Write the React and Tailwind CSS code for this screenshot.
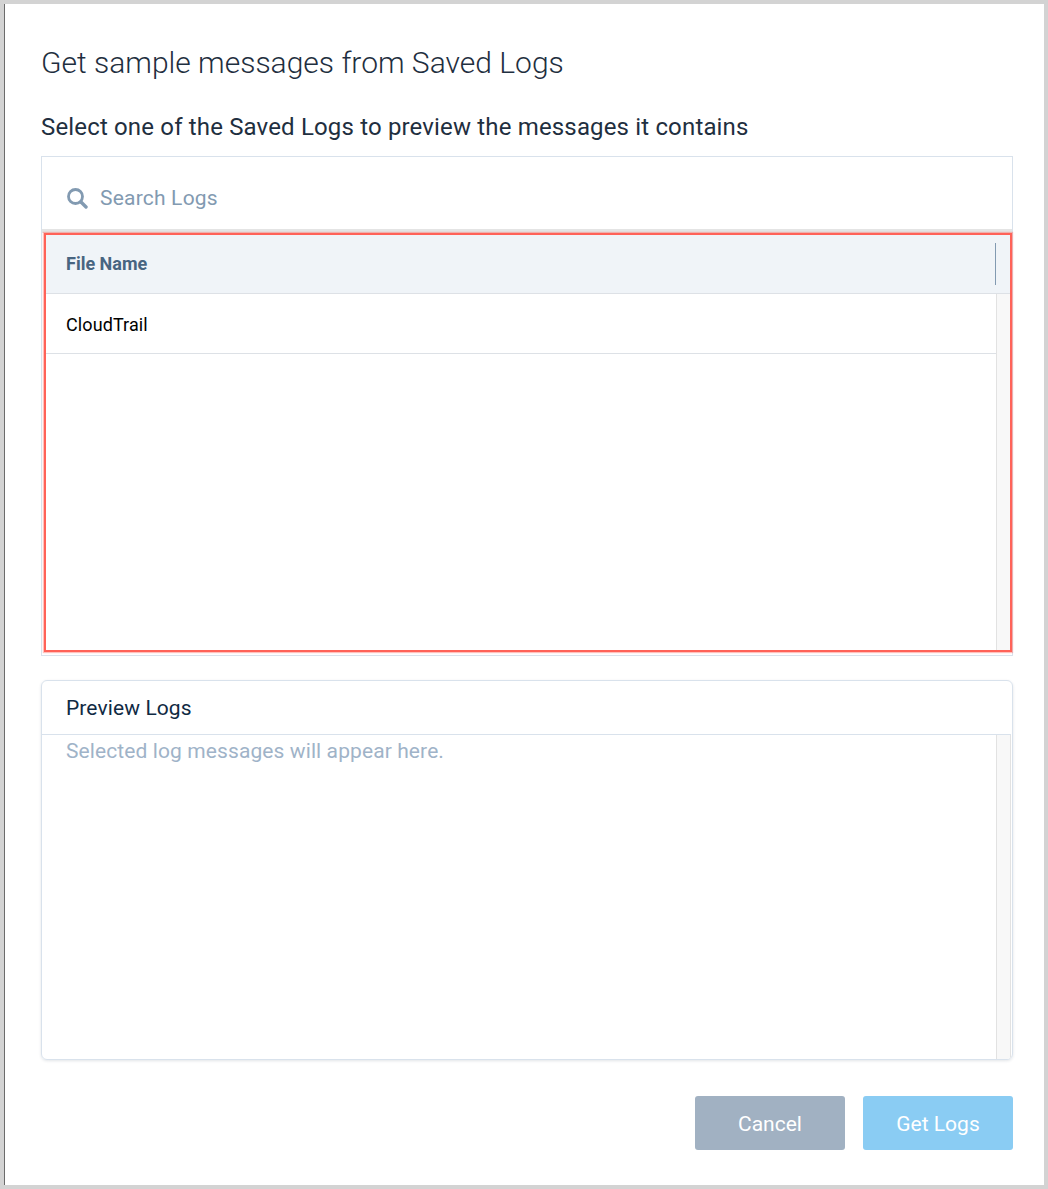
import React from "react";

const App = () => {
  return (
    <div className="w-[1048px] h-[1189px] bg-[#d3d3d3] p-1 font-['Roboto',sans-serif]">
      <div className="h-full bg-white border-l border-l-[#6b6b6b] pl-9 pr-[31px] flex flex-col">
        <h1 className="mt-[41px] h-9 text-[30px] leading-9 font-light text-[#1f2f40]">
          Get sample messages from Saved Logs
        </h1>
        <h2 className="mt-8 h-7 text-[24px] leading-7 text-[#1f2f40] tracking-[0.16px]">
          Select one of the Saved Logs to preview the messages it contains
        </h2>

        <div className="mt-[15px] h-[500px] border border-[#d9e2ec] flex flex-col">
          <div className="h-[72px] pl-6 pt-3 flex items-center gap-3 text-[#829ab1]">
            <svg width="22" height="22" viewBox="0 0 22 22" fill="none" stroke="currentColor" className="mb-[3px]">
              <circle cx="9.5" cy="9.5" r="7" strokeWidth="2.8" />
              <line x1="15" y1="15" x2="20" y2="20" strokeWidth="3.4" strokeLinecap="round" />
            </svg>
            <span className="text-[21px] tracking-[0.2px]">Search Logs</span>
          </div>
          <div className="h-1 bg-[#e4e4e4]" />
          <div className="flex-1 ml-0.5 border-2 border-[#ff6258] shadow-[0_0_1px_1px_rgba(255,100,90,0.4)] flex flex-col">
            <div className="h-[59px] bg-[#f0f4f8] border-b border-[#dde1e6] pl-5 pr-[14px] pb-px flex items-center justify-between">
              <span className="text-[18px] font-bold text-[#486581]">File Name</span>
              <span className="w-px h-[42px] bg-[#829ab1]" />
            </div>
            <div className="flex-1 flex">
              <div className="flex-1">
                <div className="h-[60px] border-b border-[#dde1e6] pl-5 pt-0.5 flex items-center text-[18px] tracking-[0.1px] text-black">
                  CloudTrail
                </div>
              </div>
              <div className="w-[14px] bg-[#f8f8f8] border-l border-[#e2e2e2]" />
            </div>
          </div>
          <div className="h-[3px]" />
        </div>

        <div className="mt-6 h-[380px] border border-[#d9e2ec] rounded-[6px] shadow-[0_1px_3px_rgba(16,42,67,0.12)] flex flex-col overflow-hidden">
          <div className="h-[54px] mr-px border-b border-[#d9e2ec] pl-6 pt-[3px] flex items-center text-[21px] tracking-[0.1px] text-[#102a43]">
            Preview Logs
          </div>
          <div className="flex-1 flex mr-px">
            <div className="flex-1 pl-6 pt-px text-[21px] leading-[30px] tracking-[0.1px] text-[#9fb3c8]">
              Selected log messages will appear here.
            </div>
            <div className="w-[15px] bg-[#f8f8f8] border-x border-[#e2e2e2]" />
          </div>
        </div>

        <div className="mt-9 flex justify-end gap-[18px]">
          <button className="w-[150px] h-[54px] pt-[3px] rounded-[3px] bg-[#a1b1c2] text-white text-[21px]">Cancel</button>
          <button className="w-[150px] h-[54px] pt-[3px] rounded-[3px] bg-[#8accf3] text-white text-[21px]">Get Logs</button>
        </div>
      </div>
    </div>
  );
};

export default App;
